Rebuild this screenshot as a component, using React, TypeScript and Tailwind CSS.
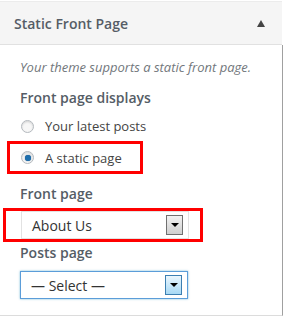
const font = { fontFamily: '"Open Sans", "Noto Sans", sans-serif' };

function Radio({ checked }: { checked?: boolean }) {
  return (
    <span className="flex h-[13px] w-[13px] items-center justify-center rounded-full border border-[#b4b9be] bg-[#f7f7f7] shadow-[inset_0_1px_2px_rgba(0,0,0,0.15)]">
      {checked && <span className="h-[6px] w-[6px] rounded-full bg-[#1e6fae] shadow-[0_0_1px_#0b3a66]" />}
    </span>
  );
}

function SelectBox({ label, focus }: { label: string; focus?: boolean }) {
  return (
    <div
      className={`flex h-[28px] w-[168px] items-center justify-between border pl-[10px] pr-[5px] ${
        focus ? "border-[#5b9dd9] shadow-[0_0_2px_rgba(30,140,190,0.6)]" : "border-[#e2e2e2]"
      } bg-white`}
    >
      <span className="text-[14px] text-[#333]">{label}</span>
      <span
        className={`flex h-[20px] w-[17px] items-center justify-center border ${
          focus
            ? "border-[#3c7fb1] bg-gradient-to-b from-[#eaf6fd] to-[#a7d9f5]"
            : "border-[#707070] bg-gradient-to-b from-[#f2f2f2] to-[#cfcfcf]"
        }`}
      >
        <span className="h-0 w-0 border-x-[4px] border-t-[4px] border-x-transparent border-t-black" />
      </span>
    </div>
  );
}

export default function App() {
  return (
    <div className="h-[317px] w-[284px] overflow-hidden bg-white" style={font}>
      {/* Header */}
      <div className="mt-px flex h-[44px] w-[282px] items-center justify-between border-t border-b border-t-[#ececec] border-b-[#e1e1e1] bg-[#f5f5f5] pl-[14px] pr-[17px]">
        <span className="text-[14px] font-semibold text-[#555d66]">Static Front Page</span>
        <span className="h-0 w-0 border-x-[4px] border-b-[7px] border-x-transparent border-b-[#444]" />
      </div>

      {/* Body */}
      <div className="h-[271px] w-[283px] border-r border-b border-r-[#a0a0a0] border-b-[#dcdcdc] pt-[13px] pl-[20px]">
        <p className="text-[13px] italic leading-[18px] text-[#72777c]">
          Your theme supports a static front page.
        </p>

        <p className="mt-[12px] text-[14px] font-semibold leading-[20px] text-[#555d66]">Front page displays</p>

        <div className="mt-[9px] flex items-center gap-[11px] pl-px">
          <Radio />
          <span className="text-[13px] leading-[18px] text-[#444]">Your latest posts</span>
        </div>

        <div className="-ml-[13px] mt-[6px] flex h-[33px] w-[136px] items-center gap-[11px] border-[3px] border-[#ff0000] pl-[11px]">
          <Radio checked />
          <span className="text-[13px] leading-[18px] text-[#444]">A static page</span>
        </div>

        <p className="mt-[10px] text-[14px] font-semibold leading-[20px] text-[#555d66]">Front page</p>

        <div className="-ml-[17px] mt-[4px] flex h-[34px] w-[200px] items-center border-[3px] border-[#ff0000] pl-[15px]">
          <SelectBox label="About Us" />
        </div>

        <p className="mt-px text-[14px] font-semibold leading-[20px] text-[#555d66]">Posts page</p>

        <div className="mt-[8px]">
          <SelectBox label="— Select —" focus />
        </div>
      </div>
    </div>
  );
}
